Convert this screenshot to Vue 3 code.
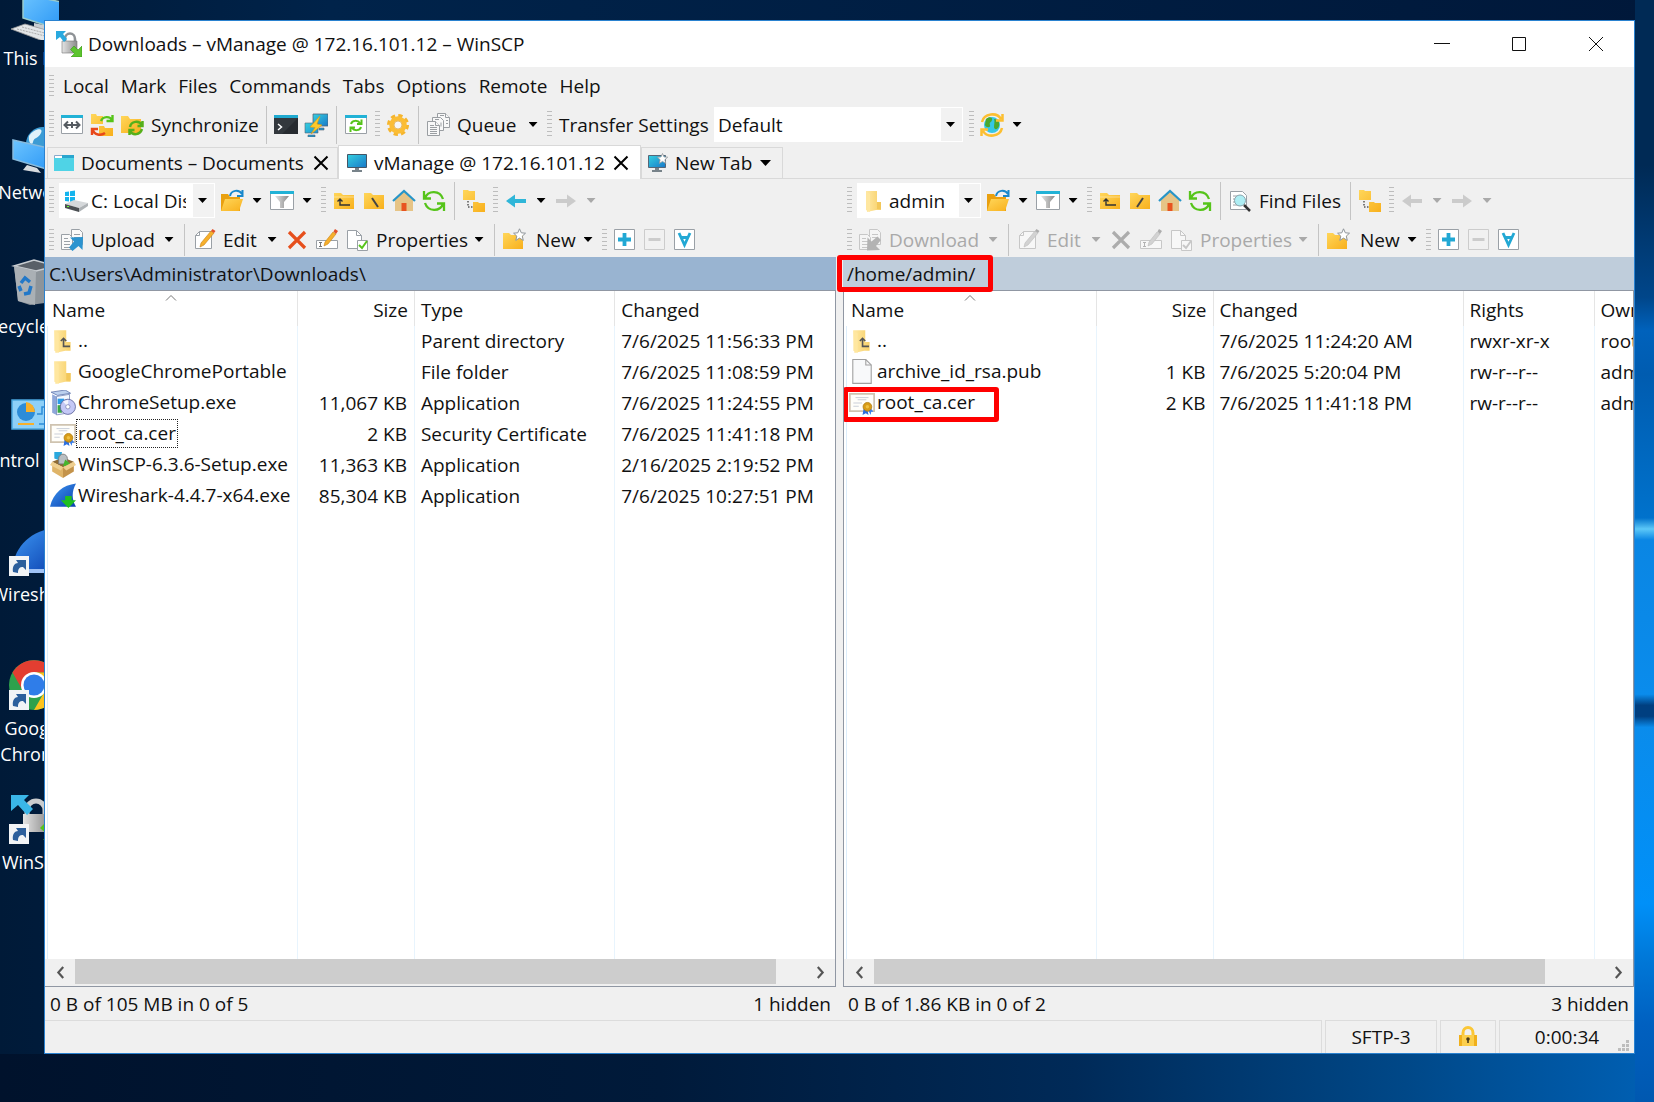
<script setup>
const desktopIcons = [
  { icon: 'd-pc', label: 'This PC' },
  { icon: 'd-net', label: 'Network' },
  { icon: 'd-bin', label: 'Recycle Bin' },
  { icon: 'd-panel', label: 'Control Panel' },
  { icon: 'd-shark', label: 'Wireshark', shortcut: true },
  { icon: 'd-chrome', label: 'Google', second: 'Chrome', shortcut: true },
  { icon: 'd-scp', label: 'WinSCP', shortcut: true },
]

const menus = ['Local', 'Mark', 'Files', 'Commands', 'Tabs', 'Options', 'Remote', 'Help']

const grip = { kind: 'grip' }
const sep = { kind: 'sep' }
const more = { kind: 'more' }
const moreOff = { kind: 'more', off: true }
const btn = (icon, title, off = false) => ({ kind: 'btn', icon, title, off })
const text = (icon, label, width, off = false) => ({ kind: 'btn', icon, label, title: label, width, off })

const mainBar = [
  grip, btn('i-compare', 'Compare'), btn('i-syncdirs', 'Synchronize browsing'), text('i-sync', 'Synchronize', 114), sep,
  btn('i-console', 'Console'), btn('i-putty', 'Open in PuTTY'), sep,
  btn('i-reload', 'Refresh'), grip, btn('i-gear', 'Preferences'), sep,
  text('i-queue', 'Queue', 70), more, grip,
  { kind: 'label', label: 'Transfer Settings', width: 157, id: 'transfer' },
  { kind: 'combo', id: 'transfer', value: 'Default', width: 249 },
  grip, btn('i-globe', 'Keep remote directory up to date'), more,
]

const navBar = (id, icon, value, width, root, find) => [
  grip, { kind: 'combo', id, icon, value, width, title: 'Location' },
  btn('i-open', 'Open directory'), more, btn('i-filter', 'Filter'), more, grip,
  btn('i-up', 'Parent directory'), btn(root, 'Root directory'), btn('i-home', 'Home directory'), btn('i-refresh', 'Refresh'), sep,
  ...(find ? [text('i-find', 'Find Files', 90), sep] : []),
  btn('i-tree', 'Tree'), grip,
  btn(find ? 'i-back-off' : 'i-back', 'Back', find), find ? moreOff : more,
  btn('i-fwd-off', 'Forward', true), moreOff,
]

const fileBar = (label, icon, width, off) => [
  grip, text(icon, label, width, off), off ? moreOff : more, sep,
  text('i-edit', 'Edit', 43, off), off ? moreOff : more,
  btn('i-delete', 'Delete', off), btn('i-rename', 'Rename', off), text('i-props', 'Properties', 97, off), off ? moreOff : more, sep,
  text('i-new', 'New', 49), more, grip,
  btn('i-plus', 'Select files'), btn('i-minus', 'Unselect files'), btn('i-all', 'Select all'),
]

const panes = [
  {
    id: 'local',
    nav: navBar('drive', 'i-drive', 'C: Local Disk', 156, 'i-root-l', false),
    actions: fileBar('Upload', 'i-upload', 72, false),
    path: 'C:\\Users\\Administrator\\Downloads\\',
    cols: [{ t: 'Name', w: 252 }, { t: 'Size', w: 117, right: true }, { t: 'Type', w: 200 }, { t: 'Changed', w: 220 }],
    rows: [
      ['f-up', '..', '', 'Parent directory', '7/6/2025 11:56:33 PM'],
      ['f-folder', 'GoogleChromePortable', '', 'File folder', '7/6/2025 11:08:59 PM'],
      ['f-setup', 'ChromeSetup.exe', '11,067 KB', 'Application', '7/6/2025 11:24:55 PM'],
      ['f-cert', 'root_ca.cer', '2 KB', 'Security Certificate', '7/6/2025 11:41:18 PM'],
      ['f-box', 'WinSCP-6.3.6-Setup.exe', '11,363 KB', 'Application', '2/16/2025 2:19:52 PM'],
      ['f-shark', 'Wireshark-4.4.7-x64.exe', '85,304 KB', 'Application', '7/6/2025 10:27:51 PM'],
    ],
    focused: 3,
    marked: -1,
    thumb: 96,
    summary: '0 B of 105 MB in 0 of 5',
    hidden: '1 hidden',
  },
  {
    id: 'remote',
    nav: navBar('remote-dir', 'f-folder', 'admin', 124, 'i-root-r', true),
    actions: fileBar('Download', 'i-download', 98, true),
    path: '/home/admin/',
    cols: [{ t: 'Name', w: 252 }, { t: 'Size', w: 117, right: true }, { t: 'Changed', w: 250 }, { t: 'Rights', w: 131 }, { t: 'Owner', w: 120 }],
    rows: [
      ['f-up', '..', '', '7/6/2025 11:24:20 AM', 'rwxr-xr-x', 'root'],
      ['f-file', 'archive_id_rsa.pub', '1 KB', '7/6/2025 5:20:04 PM', 'rw-r--r--', 'admin'],
      ['f-cert', 'root_ca.cer', '2 KB', '7/6/2025 11:41:18 PM', 'rw-r--r--', 'admin'],
    ],
    focused: -1,
    marked: 2,
    thumb: 92,
    summary: '0 B of 1.86 KB in 0 of 2',
    hidden: '3 hidden',
  },
]

const px = (n) => (n ? { width: n + 'px' } : null)
</script>

<template>
  <div class="desktop">
    <svg class="defs" aria-hidden="true">
      <defs>
        <linearGradient id="gy" x1="0" y1="0" x2="1" y2="1"><stop offset="0" stop-color="#ffd65a" /><stop offset="1" stop-color="#f8b01c" /></linearGradient>
        <linearGradient id="gb" x1="0" y1="0" x2="1" y2="1"><stop offset="0" stop-color="#35d0e0" /><stop offset="1" stop-color="#1878c8" /></linearGradient>
        <linearGradient id="gs" x1="0" y1="0" x2="1" y2="1"><stop offset="0" stop-color="#6cc4ff" /><stop offset="1" stop-color="#2a96f5" /></linearGradient>
        <linearGradient id="gg" x1="0" y1="0" x2="1" y2="0"><stop offset="0" stop-color="#e4e4e4" /><stop offset="1" stop-color="#8a8a8a" /></linearGradient>
        <linearGradient id="gf" x1="0" y1="0" x2="1" y2="0"><stop offset="0" stop-color="#ffe9a6" /><stop offset="1" stop-color="#f7d068" /></linearGradient>
        <linearGradient id="gw" x1="0" y1="0" x2="1" y2="1"><stop offset="0" stop-color="#3f9af5" /><stop offset="1" stop-color="#0a3fae" /></linearGradient>

        <symbol id="i-compare" viewBox="0 0 24 24"><path d="M1.500 3.500h21v17h-21z" fill="#fff" stroke="#9aa0a6" /><path d="M1 2h22v3H1z" fill="#22b2d6" /><path d="M4 12h16M8 8.500L4.500 12 8 15.500M16 8.500l3.500 3.500-3.500 3.500M12 9v6" fill="none" stroke="#555b61" stroke-width="2" /></symbol>
        <symbol id="i-syncdirs" viewBox="0 0 24 24"><path d="M1 1h5l1 2h6v8H1zM9 13h5l1 2h8v8H9z" fill="url(#gy)" /><path d="M11 8c2-5 9-5 11-1M22.500 2v6h-6" fill="none" stroke="#56c41a" stroke-width="2.400" /><path d="M3 17c1 5 8 6 12 3M2 22v-6h6" fill="none" stroke="#e8481a" stroke-width="2.400" /></symbol>
        <symbol id="i-sync" viewBox="0 0 24 24"><path d="M1 3h7l2 3h11v14H1z" fill="url(#gy)" /><path d="M10 14c1-6 9-7 12-2M22.500 8v5h-5M22 16c-2 6-9 7-12 2M9.500 22v-5h5" fill="none" stroke="#56b01a" stroke-width="2.500" /></symbol>
        <symbol id="i-console" viewBox="0 0 24 24"><path d="M0 2h24v19H0z" fill="#33383d" /><path d="M24 5v16H8z" fill="#272b30" /><path d="M0 2h24v3H0z" fill="#1fa9cf" /><path d="M4 11l3.500 3L4 17" fill="none" stroke="#fff" stroke-width="1.500" /></symbol>
        <symbol id="i-putty" viewBox="0 0 24 24"><path d="M9 1h15v12H9z" fill="url(#gb)" stroke="#567" stroke-width=".8" /><path d="M1 10h13v10H1zM4 22h7v2H4zM15 15h5v2h-5z" fill="url(#gb)" stroke="#567" stroke-width=".6" /><path d="M16 3L6 14l5 .5L7 21l11-9-5-1z" fill="#ffc928" stroke="#d99a10" stroke-width=".6" /></symbol>
        <symbol id="i-reload" viewBox="0 0 24 24"><path d="M1.500 3.500h21v17h-21z" fill="#fff" stroke="#9aa0a6" /><path d="M1 2h22v3H1z" fill="#22b2d6" /><path d="M7 11c1-4 7-4 9-1M17.500 6.500V11H13M17 14c-1 4-7 4-9 1M6.500 19v-4.500H11" fill="none" stroke="#56c41a" stroke-width="2" /></symbol>
        <symbol id="i-gear" viewBox="0 0 24 24"><circle cx="12" cy="12" r="9.300" fill="none" stroke="#f5b52e" stroke-width="3.500" stroke-dasharray="4.200 3.100" /><circle cx="12" cy="12" r="6.500" fill="none" stroke="#fbbd35" stroke-width="4.500" /><circle cx="12" cy="12" r="4" fill="#f6f6f6" stroke="#dfa02a" stroke-width=".7" /></symbol>
        <symbol id="i-queue" viewBox="0 0 24 24"><g fill="#f8f8f8" stroke="#9a9ea2"><path d="M11.500.5h8l4 4v10h-12z" /><path d="M6.500 4.500h8l3 3v10h-11z" /><path d="M1.500 8.500h8l4 4v10h-12z" /><path d="M9.500 8.500v4h4M4 12.500h4M4 14.500h7M4 16.500h7M4 18.500h7M4 20.500h7M9 6.500h4M14 2.500h4M19.500.5v4h4M15 9.500v4M20 7.500h2M20 10.500h2" /></g></symbol>
        <symbol id="i-globe" viewBox="0 0 24 24"><circle cx="12" cy="12" r="8" fill="#35c7e6" /><path d="M6 6c3-3 7-2 6 1s-3 2-2 5-4 3-5 0zM14 6c4 0 6 3 5 7s-5 4-5 1 1-5 0-8z" fill="#4ba82e" /><path d="M2 9C4 0 17-1 21 6M22.500 1v6.500H16M22 15c-2 9-15 10-19 3M1.500 23v-6.500H8" fill="none" stroke="#fcbf31" stroke-width="2.500" /></symbol>
        <symbol id="i-drive" viewBox="0 0 24 24"><path d="M1 3l4-.6V7H1zM6 2.200L11 1.500V7H6zM1 8h4v4.500L1 12zM6 8h5v5.500l-5-.8z" fill="#14b4ee" /><path d="M1 15l9-4 14 3-9 5z" fill="#d5d8da" /><path d="M1 15l14 4v4L1 19z" fill="#4b4f52" /><path d="M15 19l9-5v3l-9 6z" fill="#aeb2b5" /><path d="M3 17.500h2" stroke="#6f3" /></symbol>
        <symbol id="i-open" viewBox="0 0 24 24"><path d="M1 5h7l2 3h10v14H1z" fill="#e9a00f" /><path d="M5 10h18l-4 12H1z" fill="url(#gy)" /><path d="M10 7c1-6 9-7 12-2M22.500 1v6H17" fill="none" stroke="#1888cc" stroke-width="2" /></symbol>
        <symbol id="i-filter" viewBox="0 0 24 24"><path d="M.5 3.500h23v17H.5z" fill="#fff" stroke="#9aa0a6" /><path d="M0 2h24v3H0z" fill="#22b2d6" /><path d="M5 7h14l-5 6v6h-4v-6z" fill="url(#gg)" /></symbol>
        <symbol id="i-up" viewBox="0 0 24 24"><path d="M2 4h7l2 2h11v14H2z" fill="url(#gy)" /><path d="M2 8h20" stroke="#fff" stroke-opacity=".4" /><path d="M8 11v5h10M5.500 12.500L8 10l2.500 2.500" fill="none" stroke="#333" stroke-width="1.400" /></symbol>
        <symbol id="i-root-l" viewBox="0 0 24 24"><path d="M2 4h7l2 2h11v14H2z" fill="url(#gy)" /><path d="M10 9l6 9" stroke="#444" stroke-width="2" /></symbol>
        <symbol id="i-root-r" viewBox="0 0 24 24"><path d="M2 4h7l2 2h11v14H2z" fill="url(#gy)" /><path d="M15 9l-6 9" stroke="#444" stroke-width="2" /></symbol>
        <symbol id="i-home" viewBox="0 0 24 24"><path d="M3 11l9-9 9 9v11H3z" fill="#e6c486" /><path d="M9.500 14h5v8h-5z" fill="#e85420" /><path d="M1 12L12 2l11 10" fill="none" stroke="#2795c8" stroke-width="2.200" /></symbol>
        <symbol id="i-refresh" viewBox="0 0 24 24"><path d="M3 9C6 1 18 1 21 10M2 2v7.500h7M21 15c-3 8-15 8-18-1M22 22v-7.500h-7" fill="none" stroke="#56c41a" stroke-width="2.300" /></symbol>
        <symbol id="i-tree" viewBox="0 0 24 24"><path d="M1 1h5l1 1h6v9H1zM11 13h5l1 1h6v9H11z" fill="url(#gy)" /><path d="M6 12v6h5" fill="none" stroke="#555" stroke-width="1.500" stroke-dasharray="1.500 1.500" /></symbol>
        <symbol id="i-back" viewBox="0 0 24 24"><path d="M2 12L11 5.500V10h11v4H11v4.500z" fill="#2fb6d8" /></symbol>
        <symbol id="i-back-off" viewBox="0 0 24 24"><path d="M2 12L11 5.500V10h11v4H11v4.500z" fill="#a8a8a8" /></symbol>
        <symbol id="i-fwd-off" viewBox="0 0 24 24"><path d="M22 12L13 5.500V10H2v4h11v4.500z" fill="#a8a8a8" /></symbol>
        <symbol id="i-find" viewBox="0 0 24 24"><path d="M2.500 2.500h12l4 4v14h-16z" fill="#fff" stroke="#9aa0a6" /><path d="M5 7h5M5 10h11M5 13h11M5 16h9" stroke="#9aa0a6" /><circle cx="12" cy="11.500" r="5.500" fill="#aeeef4" stroke="#8ba5ad" /><path d="M16 16l6 6" stroke="#333" stroke-width="2.500" /></symbol>
        <symbol id="i-upload" viewBox="0 0 24 24"><g fill="#fafafa" stroke="#9aa0a6"><path d="M11.500 1.500h8l3 3v12h-11z" /><path d="M1.500 6.500h8l3 3v12h-11z" /><path d="M14 6.500h6M14 9.500h6M4 10.500h4M4 13.500h6M4 16.500h6M4 19.500h6" /></g><path d="M10 9.500l13-.5-.5 13-4-4-6 5-3.500-3.500 5-6z" fill="#2b93cf" /></symbol>
        <symbol id="i-download" viewBox="0 0 24 24"><g fill="#fafafa" stroke="#9aa0a6"><path d="M11.500 1.500h8l3 3v12h-11z" /><path d="M1.500 6.500h8l3 3v12h-11z" /><path d="M14 6.500h6M14 9.500h6M4 10.500h4M4 13.500h6M4 16.500h6M4 19.500h6" /></g><path d="M22 22l-13 .5.500-13 4 4 6-5 3.500 3.500-5 6z" fill="#777" /></symbol>
        <symbol id="i-edit" viewBox="0 0 24 24"><path d="M7.500 3.500h12v17h-16v-13z" fill="#fff" stroke="#9aa0a6" /><path d="M3.500 7.500h4v-4" fill="none" stroke="#9aa0a6" /><path d="M19 3l3 2-10 12-4 2 1-4z" fill="#f6b02c" stroke="#c98213" stroke-width=".6" /><path d="M19 3l1.500-2 3 2L22 5z" fill="#e2502a" /></symbol>
        <symbol id="i-delete" viewBox="0 0 24 24"><path d="M4 4l16 16M20 4L4 20" stroke="#e64f1c" stroke-width="3.200" /></symbol>
        <symbol id="i-rename" viewBox="0 0 24 24"><path d="M1.500 12.500h21v8h-21z" fill="#fff" stroke="#9aa0a6" /><path d="M4 14.500h3M4 18.500h3M5.500 14.500v4" stroke="#777" /><path d="M18 4l3 2-8 10-4 2 1-4z" fill="#f6b02c" stroke="#c98213" stroke-width=".6" /><path d="M18.500 3.500L20 1l3 2-2 3z" fill="#e2502a" /></symbol>
        <symbol id="i-props" viewBox="0 0 24 24"><path d="M2.500 2.500h9l5 5v13h-14z" fill="#fff" stroke="#9aa0a6" /><path d="M11.500 2.500v5h5" fill="none" stroke="#9aa0a6" /><path d="M12.500 12.500h10v10h-10z" fill="#fff" stroke="#9aa0a6" /><path d="M14 17l3 3 5-7" fill="none" stroke="#56c41a" stroke-width="2" /></symbol>
        <symbol id="i-new" viewBox="0 0 24 24"><path d="M1 5h6l2 2h12v14H1z" fill="url(#gy)" /><path d="M17.500.8l1.800 4 4.200.4-3.200 2.900 1 4.300-3.800-2.300-3.700 2.300 1-4.300-3.200-2.900 4.200-.4z" fill="#fff" stroke="#8f959a" /></symbol>
        <symbol id="i-plus" viewBox="0 0 24 24"><path d="M1.500 1.500h20v20h-20z" fill="#fff" stroke="#9aa0a6" /><path d="M11.500 5v13M5 11.500h13" stroke="#22a8d4" stroke-width="3.800" /></symbol>
        <symbol id="i-minus" viewBox="0 0 24 24"><path d="M1.500 1.500h20v20h-20z" fill="#f1f1f1" stroke="#cccccc" /><path d="M5.500 11.500h12" stroke="#cccccc" stroke-width="3" /></symbol>
        <symbol id="i-all" viewBox="0 0 24 24"><path d="M1.500 1.500h20v20h-20z" fill="#fff" stroke="#9aa0a6" /><path d="M6 5l5.500 12L17 5M8 9.500h7" fill="none" stroke="#22a8d4" stroke-width="2.800" /></symbol>
        <symbol id="t-folder" viewBox="0 0 20 20"><path d="M.5 2.500h8v4h-8z" fill="#fff" stroke="#8ac" /><path d="M8 2h12v4H8z" fill="#2aa6cf" /><path d="M0 5h20v13H0z" fill="#4fd3e6" /></symbol>
        <symbol id="t-mon" viewBox="0 0 20 20"><path d="M.5 1.500h19v13H.5z" fill="url(#gb)" stroke="#456" /><path d="M8 15h4v2H8zM5 17h10v2H5z" fill="#78838a" /></symbol>
        <symbol id="t-new" viewBox="0 0 20 20"><path d="M.5 2.500h17v12H.5z" fill="url(#gb)" stroke="#567" /><path d="M7 15h4v2H7zM4 17h10v2H4z" fill="#78838a" /><path d="M14.500.5l1.500 3.400 3.700.3-2.800 2.500.9 3.700-3.300-2-3.200 2 .8-3.700L9.400 4.200l3.600-.3z" fill="#fff" stroke="#8f959a" stroke-width=".8" /></symbol>
        <symbol id="logo" viewBox="0 0 26 26"><path d="M9 12V8a5 5.500 0 0 1 10 0v4" fill="none" stroke="#8e9296" stroke-width="2.600" /><path d="M6 10h15v12H6z" fill="url(#gg)" stroke="#777" stroke-width=".6" /><path d="M0 0h10L7 3l4 5-3 3-4-5-4 3z" fill="#29a9df" /><path d="M26 26H15l3.500-3.500-4-4 3.500-3.500 4 4L26 15z" fill="#5cc42e" stroke="#3a931a" stroke-width=".6" /></symbol>

        <symbol id="f-folder" viewBox="0 0 24 24"><path d="M4 2h11v11h4v8h-5l-9 2z" fill="url(#gf)" /><path d="M4 2l4 3v18l-4-2z" fill="#ffe7a0" /><path d="M15 13h4v7h-4z" fill="#f2c75a" /></symbol>
        <symbol id="f-up" viewBox="0 0 24 24"><path d="M4 2h11v11h4v8h-5l-9 2z" fill="url(#gf)" /><path d="M4 2l4 3v18l-4-2z" fill="#ffe7a0" /><path d="M12.500 10v7h6M10 12l2.500-2.500L15 12" fill="none" stroke="#555" stroke-width="1.500" /></symbol>
        <symbol id="f-file" viewBox="0 0 24 24"><path d="M3.500.5h12l5 5v17h-17z" fill="#f8f9fa" stroke="#a0a0a0" /><path d="M15.500.5v5h5" fill="none" stroke="#a0a0a0" /></symbol>
        <symbol id="f-setup" viewBox="0 0 24 24"><path d="M1 2l13-2 5 3-12 2z" fill="#bcd0ee" stroke="#5a6fa8" stroke-width=".7" /><path d="M2 4l4 2v17l-4-2z" fill="#8fa7da" /><path d="M6 6l12-2v17L6 23z" fill="#f4f8ff" stroke="#6e82b4" stroke-width=".7" /><path d="M7 8h6v5H7z" fill="#2d9be8" /><path d="M7 14h4v7H7z" fill="#39a845" /><circle cx="16.500" cy="15.500" r="7" fill="#c4c8f6" stroke="#60689c" stroke-width=".8" /><path d="M16.500 15.500L12 10.500l5-1.500z" fill="#fff" opacity=".8" /><circle cx="16.500" cy="15.500" r="2" fill="#fff" stroke="#7a80b0" stroke-width=".7" /></symbol>
        <symbol id="f-cert" viewBox="0 0 24 24"><path d="M.8 3.500h22.400v16H.8z" fill="#fffefa" stroke="#cfc3b0" stroke-width="1.600" /><path d="M6 7h12M8 9h8M4 12h8M4 15h5" stroke="#c3c9d4" stroke-width=".8" /><path d="M13.500 17l-1 6 3-1.500L18 23l-1-5z" fill="#2b6fe0" /><path d="M17 17l3 6 .5-3h2L19.500 16z" fill="#3b80ee" /><circle cx="17" cy="15.500" r="4" fill="#d89c18" stroke="#b07a08" stroke-width=".7" /><circle cx="17" cy="15.500" r="1.600" fill="#f0c040" /></symbol>
        <symbol id="f-box" viewBox="0 0 24 24"><path d="M2 9l10-4 10 4-10 5z" fill="#8d6a34" /><path d="M4 0h7l-1 8-6-2z" fill="#2aa8de" /><path d="M8 6a4 4 0 0 1 8 0v5H8z" fill="#b9bec2" stroke="#777" stroke-width=".8" /><path d="M14 7l5 4-3 2h-4z" fill="#46b52c" /><path d="M2 9l10 5v10L2 18z" fill="#dfb468" /><path d="M22 9l-10 5v10l10-6z" fill="#c4934a" /><path d="M2 9l10 5-2 3L0 12zM22 9l-10 5 3 3 9-5z" fill="#efcf90" /></symbol>
        <symbol id="f-shark" viewBox="0 0 24 24"><path d="M0 22C3 9 12 2 24 .5c-4 7-4 15 0 21.500z" fill="url(#gw)" /><path d="M14 12h6v4h4l-7 7-7-7h4z" fill="#1fbf1f" /></symbol>

        <symbol id="i-lock" viewBox="0 0 20 24"><path d="M5 12V8a5 5.500 0 0 1 10 0v4" fill="none" stroke="#fbc736" stroke-width="3" /><path d="M1 10h18v11H1z" fill="#f0b01c" /><path d="M4 10h12v11H4z" fill="#fccf4d" /><circle cx="10" cy="14" r="1.800" fill="#4a3b1a" /><path d="M9.200 14h1.600v4H9.200z" fill="#4a3b1a" /></symbol>

        <symbol id="d-pc" viewBox="0 0 50 50"><path d="M14 4l38 8v28L14 28z" fill="url(#gs)" stroke="#9cc" stroke-width="1.500" /><path d="M25 33l20 4-2 5-18-5z" fill="#c9ced2" /><path d="M2 39l14-5 32 9-14 8z" fill="#e3e6e8" stroke="#999" stroke-width=".8" /><path d="M8 39l32 8M13 37l30 8" stroke="#aaa" stroke-dasharray="2 1" /></symbol>
        <symbol id="d-net" viewBox="0 0 50 50"><circle cx="34" cy="20" r="17" fill="#3b9bd4" /><path d="M20 12c5-8 15-9 12-3s-7 4-8 9-5 0-4-6z" fill="#dff2fa" /><path d="M4 16l40 9v22L4 35z" fill="url(#gs)" stroke="#8bd" stroke-width="1.500" /><path d="M18 41l10 3 4 5-18-3z" fill="#d8dcdf" /></symbol>
        <symbol id="d-bin" viewBox="0 0 50 50"><path d="M5 8l20-6 22 6-4 36-22 3-12-4z" fill="#8d949a" /><path d="M5 8l22 5 20-5-22-6z" fill="#596068" stroke="#c8cdd2" stroke-width="1.500" /><path d="M5 8l22 5-1 34-17-4z" fill="#aab0b5" /><path d="M12 25l4-5 5 4M22 28l-2 7-5 1M12 33l-2-5" fill="none" stroke="#2278c8" stroke-width="3.500" /></symbol>
        <symbol id="d-panel" viewBox="0 0 50 50"><path d="M3 8h46v29H3z" fill="#8ed0f8" stroke="#4aa5dd" stroke-width="1.500" /><circle cx="17" cy="20" r="9" fill="#2d8cd8" /><path d="M17 20V10a10 10 0 0 1 9 10z" fill="#f6b02c" /><path d="M28 22h5v-7h12M30 32h15" stroke="#2d8cd8" stroke-width="1.500" fill="none" /><path d="M9 32h16" stroke="#f6b02c" stroke-width="2" /></symbol>
        <symbol id="d-shark" viewBox="0 0 50 50"><path d="M3 46C4 24 18 6 44 2c6 14 6 30 6 44z" fill="url(#gw)" /><path d="M3 43h47v4H3z" fill="#9fc2f5" /></symbol>
        <symbol id="d-chrome" viewBox="0 0 50 50"><circle cx="25" cy="25" r="25" fill="#2ea14c" /><path d="M3.500 12.500A25 25 0 0 1 46.500 12.500H25L14 31z" fill="#e33e31" /><path d="M46.500 12.500A25 25 0 0 1 25 50L36 31 25 12.500z" fill="#fcc31e" /><circle cx="25" cy="25" r="13" fill="#fff" /><circle cx="25" cy="25" r="10.500" fill="#2f7de9" /></symbol>
        <symbol id="d-scp" viewBox="0 0 50 50"><path d="M18 24v-8a9 9 0 0 1 18 0v8" fill="none" stroke="#c9ccce" stroke-width="5" /><path d="M14 20h26v18H14z" fill="url(#gg)" /><path d="M2 1h18l-5 5 9 9-6 6-9-10-7 6z" fill="#3ab6e8" /><path d="M50 24v22H34l5-5-8-7 8-8z" fill="#56c41a" /></symbol>
        <symbol id="d-link" viewBox="0 0 20 20"><path d="M0 0h20v20H0z" fill="#f2f4f6" /><path d="M4 16C3 10 6 7 9 7L7 4h10v10l-3-3c-3 0-5 1-5 6z" fill="#2c5f9c" /></symbol>
      </defs>
    </svg>

    <ul class="shortcuts">
      <li v-for="d in desktopIcons" :key="d.label">
        <span class="pic">
          <svg class="big"><use :href="'#' + d.icon" /></svg>
          <svg v-if="d.shortcut" class="link"><use href="#d-link" /></svg>
        </span>
        <span>{{ d.label }}</span>
        <span v-if="d.second">{{ d.second }}</span>
      </li>
    </ul>

    <main class="window">
      <header class="title">
        <svg class="logo"><use href="#logo" /></svg>
        <h1>Downloads – vManage @ 172.16.101.12 – WinSCP</h1>
        <button type="button" aria-label="Minimize"><svg viewBox="0 0 16 16"><path d="M0 7.500h16" /></svg></button>
        <button type="button" aria-label="Maximize"><svg viewBox="0 0 16 16"><path d="M1.500 1.500h13v13h-13z" /></svg></button>
        <button type="button" aria-label="Close"><svg viewBox="0 0 16 16"><path d="M1 1l14 14M15 1L1 15" /></svg></button>
      </header>

      <nav class="menu">
        <i class="grip"></i>
        <button v-for="m in menus" :key="m" type="button">{{ m }}</button>
      </nav>

      <div class="bar">
        <template v-for="(it, i) in mainBar" :key="i">
          <i v-if="it.kind === 'grip'" class="grip"></i>
          <i v-else-if="it.kind === 'sep'" class="sep"></i>
          <button v-else-if="it.kind === 'more'" type="button" class="more" aria-label="More"></button>
          <label v-else-if="it.kind === 'label'" :for="it.id" class="label" :style="px(it.width)">{{ it.label }}</label>
          <span v-else-if="it.kind === 'combo'" class="combo" :style="px(it.width)">
            <select :id="it.id"><option>{{ it.value }}</option></select>
          </span>
          <button v-else type="button" class="tool" :aria-label="it.title">
            <svg class="ico"><use :href="'#' + it.icon" /></svg>
            <span v-if="it.label" class="label" :style="px(it.width)">{{ it.label }}</span>
          </button>
        </template>
      </div>

      <div class="tabs">
        <button type="button" class="tab first"><svg><use href="#t-folder" /></svg><span>Documents – Documents</span><svg class="x" viewBox="0 0 16 16"><path d="M1.500 1.500l13 13M14.500 1.500l-13 13" /></svg></button>
        <button type="button" class="tab active"><svg><use href="#t-mon" /></svg><span>vManage @ 172.16.101.12</span><svg class="x" viewBox="0 0 16 16"><path d="M1.500 1.500l13 13M14.500 1.500l-13 13" /></svg></button>
        <button type="button" class="tab new"><svg><use href="#t-new" /></svg><span>New Tab</span><i class="caret"></i></button>
      </div>

      <div class="panes">
        <section v-for="p in panes" :key="p.id" class="pane" :class="p.id">
          <div v-for="(items, b) in [p.nav, p.actions]" :key="b" class="bar" :class="{ short: b === 1 }">
            <template v-for="(it, i) in items" :key="i">
              <i v-if="it.kind === 'grip'" class="grip"></i>
              <i v-else-if="it.kind === 'sep'" class="sep"></i>
              <button v-else-if="it.kind === 'more'" type="button" class="more" :class="{ off: it.off }" aria-label="More"></button>
              <span v-else-if="it.kind === 'combo'" class="combo" :style="px(it.width)">
                <svg class="ico"><use :href="'#' + it.icon" /></svg>
                <select :id="it.id" :aria-label="it.title"><option>{{ it.value }}</option></select>
              </span>
              <button v-else type="button" class="tool" :class="{ off: it.off, roomy: it.label === 'New' }" :aria-label="it.title">
                <svg class="ico"><use :href="'#' + it.icon" /></svg>
                <span v-if="it.label" class="label" :style="px(it.width)">{{ it.label }}</span>
              </button>
            </template>
          </div>

          <div class="path">
            {{ p.path }}
            <i v-if="p.id === 'remote'" class="mark"></i>
          </div>

          <div class="frame">
            <div class="list">
              <table>
                <colgroup><col v-for="c in p.cols" :key="c.t" :style="px(c.w)" /></colgroup>
                <thead>
                  <tr>
                    <th v-for="(c, i) in p.cols" :key="c.t" :class="{ right: c.right }">
                      {{ c.t }}
                      <svg v-if="i === 0" class="sort" viewBox="0 0 12 6"><path d="M1 5.500l5-5 5 5" /></svg>
                    </th>
                  </tr>
                </thead>
                <tbody>
                  <tr v-for="(r, ri) in p.rows" :key="r[1]">
                    <td class="name">
                      <div class="cell">
                        <svg class="file"><use :href="'#' + r[0]" /></svg>
                        <span :class="{ focus: ri === p.focused }">{{ r[1] }}</span>
                        <i v-if="ri === p.marked" class="mark"></i>
                      </div>
                    </td>
                    <td v-for="(v, i) in r.slice(2)" :key="i" :class="{ right: i === 0 }">{{ v }}</td>
                  </tr>
                  <tr class="rest"><td v-for="c in p.cols" :key="c.t"></td></tr>
                </tbody>
              </table>
            </div>
            <div class="scroll">
              <button type="button" aria-label="Scroll left"><svg viewBox="0 0 8 12"><path d="M6.500 1L2 6l4.500 5" /></svg></button>
              <div class="track"><div class="thumb" :style="{ width: p.thumb + '%' }"></div></div>
              <button type="button" aria-label="Scroll right"><svg viewBox="0 0 8 12"><path d="M1.500 1L6 6l-4.500 5" /></svg></button>
            </div>
          </div>
          <div class="summary"><span>{{ p.summary }}</span><span>{{ p.hidden }}</span></div>
        </section>
      </div>

      <footer class="status">
        <span class="fill"></span>
        <span class="proto">SFTP-3</span>
        <span class="secure"><svg><use href="#i-lock" /></svg></span>
        <span class="time">0:00:34
          <svg class="size" viewBox="0 0 12 12"><path d="M8 0h3v3H8zM4 4h3v3H4zM8 4h3v3H8zM0 8h3v3H0zM4 8h3v3H4zM8 8h3v3H8z" /></svg>
        </span>
      </footer>
    </main>
  </div>
</template>

<style>
body {
  margin: 0;
}
</style>

<style scoped>
.desktop {
  position: relative;
  box-sizing: border-box;
  min-height: 100vh;
  padding: 20px 19px 48px 44px;
  overflow: hidden;
  display: flex;
  font: 19px/26px "Open Sans", "Noto Sans", sans-serif;
  color: #111;
  background:
    linear-gradient(180deg, #002a55 0, #002a55 15%, #00468a 27%, #0062bc 30%, #005cb0 34%, #0072cc 47%, #5cc8f8 48%, #0a86e4 49%, #0a8cec 63%, #003f80 64%, #003f80 65%, #0a8cec 66%, #0090f8 82%, #0078d8 87%, #0060c0 93%, #0058b0 100%) right top / 19px 100% no-repeat,
    linear-gradient(90deg, #00122c 0, #001a3a 40%, #002a58 65%, #004888 85%, #0060b4 100%) left bottom / 100% 48px no-repeat,
    linear-gradient(90deg, #001a38 0, #00234a 20%, #00183a 100%);
}
.defs {
  position: absolute;
  width: 0;
  height: 0;
}
svg {
  flex: none;
  display: block;
}
button {
  padding: 0;
  border: 0;
  background: none;
  font: inherit;
  color: inherit;
  white-space: nowrap;
}
i {
  flex: none;
}

.shortcuts {
  position: absolute;
  top: -10px;
  left: -30px;
  width: 128px;
  margin: 0;
  padding: 0;
  list-style: none;
  font-size: 18px;
  color: #fff;
}
.shortcuts li {
  display: flex;
  flex-direction: column;
  align-items: center;
  height: 134px;
  white-space: nowrap;
}
.pic {
  position: relative;
  margin-bottom: 5px;
}
.big {
  width: 50px;
  height: 50px;
}
.link {
  position: absolute;
  left: 0;
  bottom: 0;
  width: 20px;
  height: 20px;
}

.window {
  position: relative;
  flex: 1;
  min-width: 0;
  display: flex;
  flex-direction: column;
  background: #f0f0f0;
  border: 1px solid #2a82d0;
}

.title {
  display: flex;
  align-items: center;
  height: 46px;
  padding-left: 11px;
  background: #fff;
}
.logo {
  width: 26px;
  height: 26px;
}
.title h1 {
  flex: 1;
  margin: 0 0 0 6px;
  font-size: 19px;
  font-weight: 400;
}
.title button {
  width: 77px;
  height: 45px;
  display: flex;
  align-items: center;
  justify-content: center;
}
.title button svg {
  width: 16px;
  height: 16px;
  fill: none;
  stroke: #111;
}

.menu {
  display: flex;
  align-items: center;
  height: 37px;
}
.menu button {
  padding: 0 6px;
}

.bar {
  box-sizing: border-box;
  display: flex;
  align-items: center;
  height: 41px;
  overflow: hidden;
}
.bar.short {
  height: 37px;
}
.pane .bar {
  padding-top: 2px;
}
.grip {
  width: 12px;
  height: 28px;
  background: repeating-linear-gradient(180deg, #bdbdbd 0 1px, transparent 1px 4px) 4px 0 / 5px 100% no-repeat;
}
.menu .grip,
.short .grip {
  height: 21px;
}
.sep {
  width: 10px;
  height: 38px;
  background: linear-gradient(#c4c4c4, #c4c4c4) 5px 0 / 1px 100% no-repeat;
}
.short .sep {
  height: 32px;
}
.tool {
  display: flex;
  align-items: center;
  height: 32px;
}
.ico {
  width: 24px;
  height: 24px;
  margin: 0 3px;
}
.label {
  box-sizing: border-box;
  padding-left: 4px;
  text-align: left;
  white-space: nowrap;
}
.roomy .label {
  padding-left: 7px;
}
.tool.off {
  color: #a9a9a9;
}
.tool.off .ico {
  filter: grayscale(1);
  opacity: 0.5;
}
.more {
  flex: none;
  width: 20px;
  height: 32px;
}
.more::after,
.combo::after,
.caret {
  content: "";
  display: block;
  margin: auto;
  width: 9px;
  height: 5px;
  background: #000;
  clip-path: polygon(0 0, 100% 0, 50% 100%);
}
.more.off::after {
  background: #a9a9a9;
}
.combo {
  position: relative;
  flex: none;
  box-sizing: border-box;
  display: flex;
  align-items: center;
  height: 35px;
  margin: 0 2px;
  padding-right: 28px;
  border: 1px solid #fff;
  background: linear-gradient(#f2f2f2, #f2f2f2) right / 21px 100% no-repeat #fff;
}
.combo::after {
  position: absolute;
  right: 7px;
  top: 14px;
}
.combo select {
  flex: 1;
  min-width: 0;
  height: 33px;
  padding: 0 0 0 3px;
  border: 0;
  appearance: none;
  background: none;
  font: inherit;
  color: inherit;
}
.combo .ico {
  margin-right: 0;
  margin-left: 4px;
}

.tabs {
  display: flex;
  align-items: flex-end;
  height: 34px;
  background: linear-gradient(#d9d9d9, #d9d9d9) left bottom / 100% 1px no-repeat;
}
.tab {
  box-sizing: border-box;
  display: flex;
  align-items: center;
  height: 32px;
  border: 1px solid #d9d9d9;
}
.tab svg {
  width: 20px;
  height: 20px;
}
.tab span {
  flex: 1;
  text-align: left;
  padding-left: 7px;
}
.tab .x {
  width: 16px;
  height: 16px;
  stroke: #000;
  stroke-width: 2;
}
.first {
  width: 291px;
  margin-left: 2px;
  padding: 0 8px 0 6px;
}
.active {
  width: 303px;
  height: 34px;
  padding: 0 11px 0 8px;
  background: #fff;
  border-bottom: 0;
}
.new {
  width: 142px;
  padding: 0 11px 0 6px;
}
.caret {
  margin: 0;
  width: 11px;
  height: 6px;
}

.panes {
  flex: 1;
  display: grid;
  grid-template-columns: 1fr 1fr;
  column-gap: 7px;
}
.pane {
  min-width: 0;
  display: flex;
  flex-direction: column;
}
.path {
  position: relative;
  height: 33px;
  padding-left: 4px;
  line-height: 34px;
  background: #99b4d1;
}
.remote .path {
  background: #bfcddb;
}
.mark {
  position: absolute;
  box-sizing: border-box;
  border: 5px solid #f00;
  border-radius: 3px;
  z-index: 1;
}
.path .mark {
  left: -6px;
  top: -2px;
  width: 156px;
  height: 37px;
}
.cell .mark {
  left: -1px;
  top: -1px;
  width: 156px;
  height: 35px;
}
.frame {
  flex: 1;
  display: flex;
  flex-direction: column;
  border: 1px solid #9097a3;
  border-left-width: 0;
  background: #fff;
}
.remote .frame {
  border-left-width: 1px;
}
.list {
  flex: 1;
  display: grid;
  overflow: hidden;
  min-width: 0;
  grid-template-columns: minmax(0, 1fr);
}
table {
  width: 100%;
  height: 100%;
  table-layout: fixed;
  border-collapse: collapse;
}
.remote table {
  width: 870px;
}
th {
  position: relative;
  height: 33px;
  padding: 2px 6px 0;
  font-weight: 400;
  text-align: left;
  border-right: 1px solid #e5e5e5;
}
th:first-child {
  padding-left: 7px;
}
td {
  height: 29px;
  padding: 0 6px 2px;
  white-space: nowrap;
  overflow: hidden;
  border-right: 1px solid #e8f4fd;
}
.local th:last-child,
.local td:last-child {
  border-right: 0;
}
.right {
  text-align: right;
}
td.right {
  padding-right: 7px;
}
.rest td {
  height: auto;
}
td:first-child {
  padding: 0;
  background: linear-gradient(#dcedfb, #dcedfb) 2px 0 / 1px 100% no-repeat;
}
td.name {
  overflow: visible;
}
.cell {
  position: relative;
  box-sizing: border-box;
  display: flex;
  align-items: center;
  height: 31px;
  padding: 0 0 2px 5px;
}
.cell span {
  height: 29px;
  line-height: 28px;
  padding: 0 2px;
}
.cell .focus {
  height: 27px;
  line-height: 26px;
  padding: 0 1px;
  border: 1px dotted #222;
}
.file {
  width: 26px;
  height: 26px;
}
.sort {
  position: absolute;
  left: 50%;
  top: 4px;
  width: 12px;
  height: 6px;
  margin-left: -6px;
  fill: none;
  stroke: #777;
}
.scroll {
  display: flex;
  height: 27px;
  background: #f0f0f0;
}
.scroll button {
  width: 30px;
  display: flex;
  align-items: center;
  justify-content: center;
}
.scroll svg {
  width: 9px;
  height: 13px;
  fill: none;
  stroke: #555;
  stroke-width: 2;
}
.track {
  flex: 1;
}
.thumb {
  height: 25px;
  background: #cdcdcd;
}
.summary {
  display: flex;
  align-items: center;
  justify-content: space-between;
  height: 33px;
  padding: 0 5px;
}

.status {
  display: flex;
  gap: 3px;
  height: 33px;
}
.status span {
  box-sizing: border-box;
  display: flex;
  align-items: center;
  justify-content: center;
  border: 1px solid #dcdcdc;
  border-bottom: 0;
}
.status .fill {
  flex: 1;
  border-left: 0;
}
.status .proto {
  width: 112px;
}
.status .secure {
  width: 56px;
}
.secure svg {
  width: 20px;
  height: 24px;
}
.status .time {
  position: relative;
  width: 135px;
  border-right: 0;
}
.size {
  position: absolute;
  right: 4px;
  bottom: 1px;
  width: 12px;
  height: 12px;
  fill: #bdbdbd;
}
</style>
